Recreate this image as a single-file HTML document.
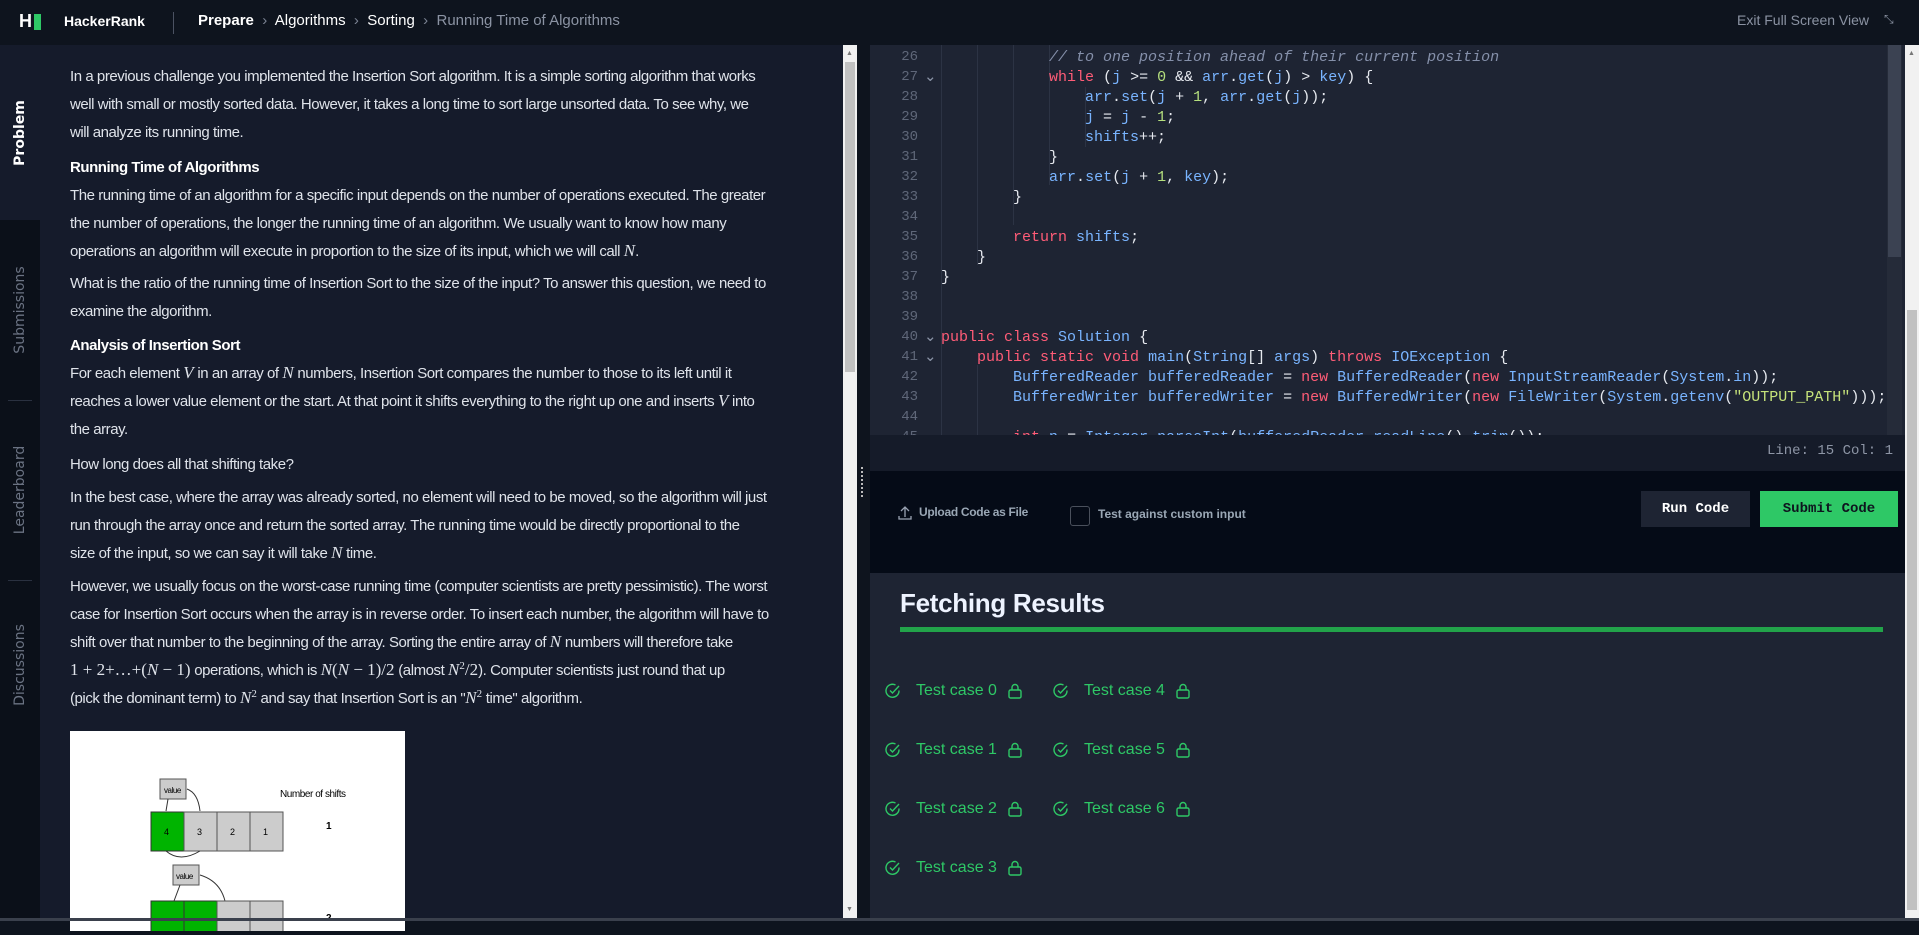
<!DOCTYPE html>
<html><head><meta charset="utf-8"><style>
*{margin:0;padding:0;box-sizing:border-box}
body{width:1919px;height:921px;overflow:hidden;background:#0e141e;font-family:"Liberation Sans",sans-serif;position:relative}
.abs{position:absolute}
#hdr{left:0;top:0;width:1919px;height:45px;background:#0e141e;color:#fff;font-size:14px}
#side{left:0;top:45px;width:40px;height:876px;background:#0b1019}
.tab{position:absolute;left:0;width:40px;color:#6b7383;font-size:14px;font-family:"DejaVu Sans",sans-serif;}
.tab span{position:absolute;left:50%;top:50%;transform:translate(-50%,-50%) rotate(-90deg);white-space:nowrap}
#left{left:40px;top:45px;width:803px;height:876px;background:#151b2b;color:#dfe3ea;font-size:15px;letter-spacing:-0.45px}
#left p{position:absolute;left:30px;width:760px;line-height:28px;white-space:nowrap}
#left b{font-weight:bold;color:#fff}
i.m{font-family:"Liberation Serif",serif;font-style:italic;font-size:17px;letter-spacing:0;line-height:0}
.mm{font-family:"Liberation Serif",serif;font-size:17px;letter-spacing:0;line-height:0}
sup{font-size:11px;line-height:0;vertical-align:6px}
.code{font-family:"Liberation Mono",monospace;font-size:15px;white-space:pre;color:#e6e9ef}
.ln{position:absolute;left:880px;width:38px;text-align:right;color:#5f6779;font-family:"Liberation Mono",monospace;font-size:14px}
.cl{position:absolute;left:941px}
.k{color:#ff5c77}.b{color:#79b4ff}.c{color:#8590aa;font-style:italic}.n{color:#b6e07e}.s{color:#c5e27a}
.tc{position:absolute;color:#2ec866;font-size:16px;display:flex;align-items:center}
</style></head><body>
<div id="hdr" class="abs">
 <div class="abs" style="left:19px;top:11px;font-weight:bold;font-size:18px;color:#fff">H</div>
 <div class="abs" style="left:34px;top:14px;width:7px;height:16px;background:#2ec866"></div>
 <div class="abs" style="left:64px;top:13px;font-weight:bold;font-size:14px">HackerRank</div>
 <div class="abs" style="left:173px;top:12px;width:1px;height:22px;background:#4b5262"></div>
 <div class="abs" style="left:198px;top:12px;font-size:15px;color:#fff"><b>Prepare</b> <span style="color:#7b8393">&nbsp;›&nbsp;</span> Algorithms <span style="color:#7b8393">&nbsp;›&nbsp;</span> Sorting <span style="color:#7b8393">&nbsp;›&nbsp;</span> <span style="color:#8b93a3">Running Time of Algorithms</span></div>
 <div class="abs" style="left:1737px;top:12px;font-size:14px;color:#8b93a3">Exit Full Screen View</div>
 <div class="abs" style="left:1884px;top:12px;font-size:12px;color:#8b93a3">⤡</div>
</div>
<div id="side" class="abs">
 <div class="tab" style="top:0;height:175px;background:#151b2b;color:#fff;font-weight:bold"><span>Problem</span></div>
 <div class="tab" style="top:175px;height:180px"><span>Submissions</span></div>
 <div class="abs" style="left:8px;top:355px;width:24px;height:1px;background:#2a3140"></div>
 <div class="tab" style="top:355px;height:180px"><span>Leaderboard</span></div>
 <div class="abs" style="left:8px;top:535px;width:24px;height:1px;background:#2a3140"></div>
 <div class="tab" style="top:535px;height:170px"><span>Discussions</span></div>
</div>
<div id="left" class="abs">
 <p style="top:18px">In a previous challenge you implemented the Insertion Sort algorithm. It is a simple sorting algorithm that works<br>well with small or mostly sorted data. However, it takes a long time to sort large unsorted data. To see why, we<br>will analyze its running time.</p>
 <p style="top:109px"><b>Running Time of Algorithms</b></p>
 <p style="top:137px">The running time of an algorithm for a specific input depends on the number of operations executed. The greater<br>the number of operations, the longer the running time of an algorithm. We usually want to know how many<br>operations an algorithm will execute in proportion to the size of its input, which we will call <i class="m">N</i>.</p>
 <p style="top:225px">What is the ratio of the running time of Insertion Sort to the size of the input? To answer this question, we need to<br>examine the algorithm.</p>
 <p style="top:287px"><b>Analysis of Insertion Sort</b></p>
 <p style="top:315px">For each element <i class="m">V</i> in an array of <i class="m">N</i> numbers, Insertion Sort compares the number to those to its left until it<br>reaches a lower value element or the start. At that point it shifts everything to the right up one and inserts <i class="m">V</i> into<br>the array.</p>
 <p style="top:406px">How long does all that shifting take?</p>
 <p style="top:439px">In the best case, where the array was already sorted, no element will need to be moved, so the algorithm will just<br>run through the array once and return the sorted array. The running time would be directly proportional to the<br>size of the input, so we can say it will take <i class="m">N</i> time.</p>
 <p style="top:528px">However, we usually focus on the worst-case running time (computer scientists are pretty pessimistic). The worst<br>case for Insertion Sort occurs when the array is in reverse order. To insert each number, the algorithm will have to<br>shift over that number to the beginning of the array. Sorting the entire array of <i class="m">N</i> numbers will therefore take<br><span class="mm">1 + 2+…+(<i>N</i> − 1)</span> operations, which is <span class="mm"><i>N</i>(<i>N</i> − 1)/2</span> (almost <span class="mm"><i>N</i><sup>2</sup>/2</span>). Computer scientists just round that up<br>(pick the dominant term) to <span class="mm"><i>N</i><sup>2</sup></span> and say that Insertion Sort is an "<span class="mm"><i>N</i><sup>2</sup></span> time" algorithm.</p>
 <div class="abs" style="left:30px;top:686px;width:335px;height:200px;background:#fff">
  <svg width="335" height="200" style="font-family:'Liberation Sans',sans-serif">
   <rect x="90" y="48" width="26" height="20" fill="#ccc" stroke="#555"/><text x="94" y="62" font-size="8">value</text>
   <text x="210" y="66" font-size="10">Number of shifts</text>
   <rect x="81" y="81" width="33" height="39" fill="#00b400" stroke="#333"/><text x="94" y="104" font-size="9">4</text>
   <rect x="114" y="81" width="33" height="39" fill="#ccc" stroke="#555"/><text x="127" y="104" font-size="9">3</text>
   <rect x="147" y="81" width="33" height="39" fill="#ccc" stroke="#555"/><text x="160" y="104" font-size="9">2</text>
   <rect x="180" y="81" width="33" height="39" fill="#ccc" stroke="#555"/><text x="193" y="104" font-size="9">1</text>
   <text x="256" y="98" font-size="10" font-weight="bold">1</text>
   <path d="M117 58 Q128 62 130 80 M98 68 L96 80 M96 120 Q110 132 130 120" fill="none" stroke="#333"/>
   <rect x="103" y="134" width="26" height="20" fill="#ccc" stroke="#555"/><text x="106" y="148" font-size="8">value</text>
   <path d="M130 144 Q150 150 155 170 M110 154 L104 170" fill="none" stroke="#333"/>
   <rect x="81" y="170" width="33" height="39" fill="#00b400" stroke="#333"/><rect x="114" y="170" width="33" height="39" fill="#00b400" stroke="#333"/>
   <rect x="147" y="170" width="33" height="39" fill="#ccc" stroke="#555"/><rect x="180" y="170" width="33" height="39" fill="#ccc" stroke="#555"/>
   <text x="256" y="190" font-size="10" font-weight="bold">2</text>
  </svg>
 </div>
</div>
<div class="abs" style="left:843px;top:45px;width:14px;height:876px;background:#f1f1f1"></div>
<div class="abs" style="left:845px;top:62px;width:10px;height:310px;background:#c1c1c1"></div>
<div class="abs" style="left:846px;top:50px;font-size:7px;color:#777">▲</div>
<div class="abs" style="left:846px;top:906px;font-size:7px;color:#777">▼</div>
<div class="abs" style="left:857px;top:45px;width:13px;height:876px;background:#0e141e"></div>
<div class="abs" style="left:861px;top:467px;width:3px;height:30px;border-left:2px dotted #bbb"></div>
<div class="abs" style="left:870px;top:45px;width:1035px;height:390px;background:#1e2433"></div>
<div class="abs code" style="left:0;top:45px;width:1905px;height:390px;overflow:hidden">
 <div style="position:absolute;left:941px;top:0;width:1px;height:390px;background:#2c3344"></div>
 <div style="position:absolute;left:977px;top:0;width:1px;height:220px;background:#2c3344"></div>
 <div style="position:absolute;left:977px;top:320px;width:1px;height:70px;background:#2c3344"></div>
 <div style="position:absolute;left:1013px;top:0;width:1px;height:180px;background:#2c3344"></div>
 <div style="position:absolute;left:1049px;top:0;width:1px;height:140px;background:#2c3344"></div>
 <div style="position:absolute;left:1085px;top:42px;width:1px;height:60px;background:#2c3344"></div>
 <div class="ln" style="top:4px">26</div><div class="cl" style="top:4px">            <span class="c">// to one position ahead of their current position</span></div>
 <div class="ln" style="top:24px">27</div><div class="abs" style="left:924px;top:22px;color:#8a93a6">⌄</div><div class="cl" style="top:24px">            <span class="k">while</span> (<span class="b">j</span> &gt;= <span class="n">0</span> &amp;&amp; <span class="b">arr</span>.<span class="b">get</span>(<span class="b">j</span>) &gt; <span class="b">key</span>) {</div>
 <div class="ln" style="top:44px">28</div><div class="cl" style="top:44px">                <span class="b">arr</span>.<span class="b">set</span>(<span class="b">j</span> + <span class="n">1</span>, <span class="b">arr</span>.<span class="b">get</span>(<span class="b">j</span>));</div>
 <div class="ln" style="top:64px">29</div><div class="cl" style="top:64px">                <span class="b">j</span> = <span class="b">j</span> - <span class="n">1</span>;</div>
 <div class="ln" style="top:84px">30</div><div class="cl" style="top:84px">                <span class="b">shifts</span>++;</div>
 <div class="ln" style="top:104px">31</div><div class="cl" style="top:104px">            }</div>
 <div class="ln" style="top:124px">32</div><div class="cl" style="top:124px">            <span class="b">arr</span>.<span class="b">set</span>(<span class="b">j</span> + <span class="n">1</span>, <span class="b">key</span>);</div>
 <div class="ln" style="top:144px">33</div><div class="cl" style="top:144px">        }</div>
 <div class="ln" style="top:164px">34</div>
 <div class="ln" style="top:184px">35</div><div class="cl" style="top:184px">        <span class="k">return</span> <span class="b">shifts</span>;</div>
 <div class="ln" style="top:204px">36</div><div class="cl" style="top:204px">    }</div>
 <div class="ln" style="top:224px">37</div><div class="cl" style="top:224px">}</div>
 <div class="ln" style="top:244px">38</div>
 <div class="ln" style="top:264px">39</div>
 <div class="ln" style="top:284px">40</div><div class="abs" style="left:924px;top:282px;color:#8a93a6">⌄</div><div class="cl" style="top:284px"><span class="k">public class</span> <span class="b">Solution</span> {</div>
 <div class="ln" style="top:304px">41</div><div class="abs" style="left:924px;top:302px;color:#8a93a6">⌄</div><div class="cl" style="top:304px">    <span class="k">public static void</span> <span class="b">main</span>(<span class="b">String</span>[] <span class="b">args</span>) <span class="k">throws</span> <span class="b">IOException</span> {</div>
 <div class="ln" style="top:324px">42</div><div class="cl" style="top:324px">        <span class="b">BufferedReader bufferedReader</span> = <span class="k">new</span> <span class="b">BufferedReader</span>(<span class="k">new</span> <span class="b">InputStreamReader</span>(<span class="b">System</span>.<span class="b">in</span>));</div>
 <div class="ln" style="top:344px">43</div><div class="cl" style="top:344px">        <span class="b">BufferedWriter bufferedWriter</span> = <span class="k">new</span> <span class="b">BufferedWriter</span>(<span class="k">new</span> <span class="b">FileWriter</span>(<span class="b">System</span>.<span class="b">getenv</span>(<span class="s">"OUTPUT_PATH"</span>)));</div>
 <div class="ln" style="top:364px">44</div>
 <div class="ln" style="top:384px">45</div><div class="cl" style="top:384px">        <span class="k">int</span> <span class="b">n</span> = <span class="b">Integer</span>.<span class="b">parseInt</span>(<span class="b">bufferedReader</span>.<span class="b">readLine</span>().<span class="b">trim</span>());</div>
</div>
<div class="abs" style="left:1887px;top:45px;width:15px;height:390px;background:#252b39"></div>
<div class="abs" style="left:1888px;top:45px;width:13px;height:212px;background:#3b4252"></div>
<div class="abs" style="left:870px;top:435px;width:1035px;height:36px;background:#151b29"></div>
<div class="abs code" style="left:1760px;top:443px;width:133px;text-align:right;color:#8d95a5;font-size:14px">Line: 15 Col: 1</div>
<div class="abs" style="left:870px;top:471px;width:1035px;height:102px;background:#050b17"></div>
<svg class="abs" style="left:898px;top:505px" width="14" height="16"><path d="M7 12V2M3 6l4-4 4 4M1 11v3h12v-3" fill="none" stroke="#9aa3b3" stroke-width="1.3"/></svg>
<div class="abs" style="left:919px;top:505px;font-size:12px;font-weight:bold;color:#9aa7b5;letter-spacing:-0.3px">Upload Code as File</div>
<div class="abs" style="left:1070px;top:506px;width:20px;height:20px;border:1px solid #4a505c;border-radius:3px"></div>
<div class="abs" style="left:1098px;top:507px;font-size:12px;font-weight:bold;color:#9aa7b5">Test against custom input</div>
<div class="abs" style="left:1641px;top:491px;width:109px;height:36px;background:#1e2433;color:#fff;font-weight:bold;font-size:14px;text-align:center;line-height:36px;font-family:'Liberation Mono',monospace">Run Code</div>
<div class="abs" style="left:1760px;top:491px;width:138px;height:36px;background:#2ec866;color:#0e141e;font-weight:bold;font-size:14px;text-align:center;line-height:36px;font-family:'Liberation Mono',monospace">Submit Code</div>
<div class="abs" style="left:870px;top:573px;width:1035px;height:348px;background:#1e2433"></div>
<div class="abs" style="left:900px;top:588px;font-size:26px;font-weight:bold;color:#eef3ff;letter-spacing:-0.3px">Fetching Results</div>
<div class="abs" style="left:900px;top:627px;width:983px;height:5px;background:#22a34a"></div>
<svg width="0" height="0" style="position:absolute"><defs>
<symbol id="ck" viewBox="0 0 16 16"><path d="M14 7.5A6.5 6.5 0 1 1 10.5 2" fill="none" stroke="#2ec866" stroke-width="1.4"/><path d="M5 7.5l2.5 2.5L14 3" fill="none" stroke="#2ec866" stroke-width="1.4"/></symbol>
<symbol id="lk" viewBox="0 0 14 16"><rect x="1" y="7" width="12" height="8" rx="1.5" fill="none" stroke="#2ec866" stroke-width="1.4"/><path d="M4 7V4.5a3 3 0 0 1 6 0V7" fill="none" stroke="#2ec866" stroke-width="1.4"/></symbol>
</defs></svg>
<div class="tc" style="left:885px;top:682px"><svg width="16" height="16"><use href="#ck"/></svg><span style="margin-left:15px">Test case 0</span><svg width="14" height="16" style="margin-left:11px"><use href="#lk"/></svg></div>
<div class="tc" style="left:1053px;top:682px"><svg width="16" height="16"><use href="#ck"/></svg><span style="margin-left:15px">Test case 4</span><svg width="14" height="16" style="margin-left:11px"><use href="#lk"/></svg></div>
<div class="tc" style="left:885px;top:741px"><svg width="16" height="16"><use href="#ck"/></svg><span style="margin-left:15px">Test case 1</span><svg width="14" height="16" style="margin-left:11px"><use href="#lk"/></svg></div>
<div class="tc" style="left:1053px;top:741px"><svg width="16" height="16"><use href="#ck"/></svg><span style="margin-left:15px">Test case 5</span><svg width="14" height="16" style="margin-left:11px"><use href="#lk"/></svg></div>
<div class="tc" style="left:885px;top:800px"><svg width="16" height="16"><use href="#ck"/></svg><span style="margin-left:15px">Test case 2</span><svg width="14" height="16" style="margin-left:11px"><use href="#lk"/></svg></div>
<div class="tc" style="left:1053px;top:800px"><svg width="16" height="16"><use href="#ck"/></svg><span style="margin-left:15px">Test case 6</span><svg width="14" height="16" style="margin-left:11px"><use href="#lk"/></svg></div>
<div class="tc" style="left:885px;top:859px"><svg width="16" height="16"><use href="#ck"/></svg><span style="margin-left:15px">Test case 3</span><svg width="14" height="16" style="margin-left:11px"><use href="#lk"/></svg></div>
<div class="abs" style="left:1905px;top:45px;width:14px;height:876px;background:#f1f1f1"></div>
<div class="abs" style="left:1907px;top:310px;width:10px;height:600px;background:#c1c1c1"></div>
<div class="abs" style="left:1908px;top:50px;font-size:7px;color:#777">▲</div>
<div class="abs" style="left:0;top:918px;width:1919px;height:3px;background:#3a404c"></div>
</body></html>
